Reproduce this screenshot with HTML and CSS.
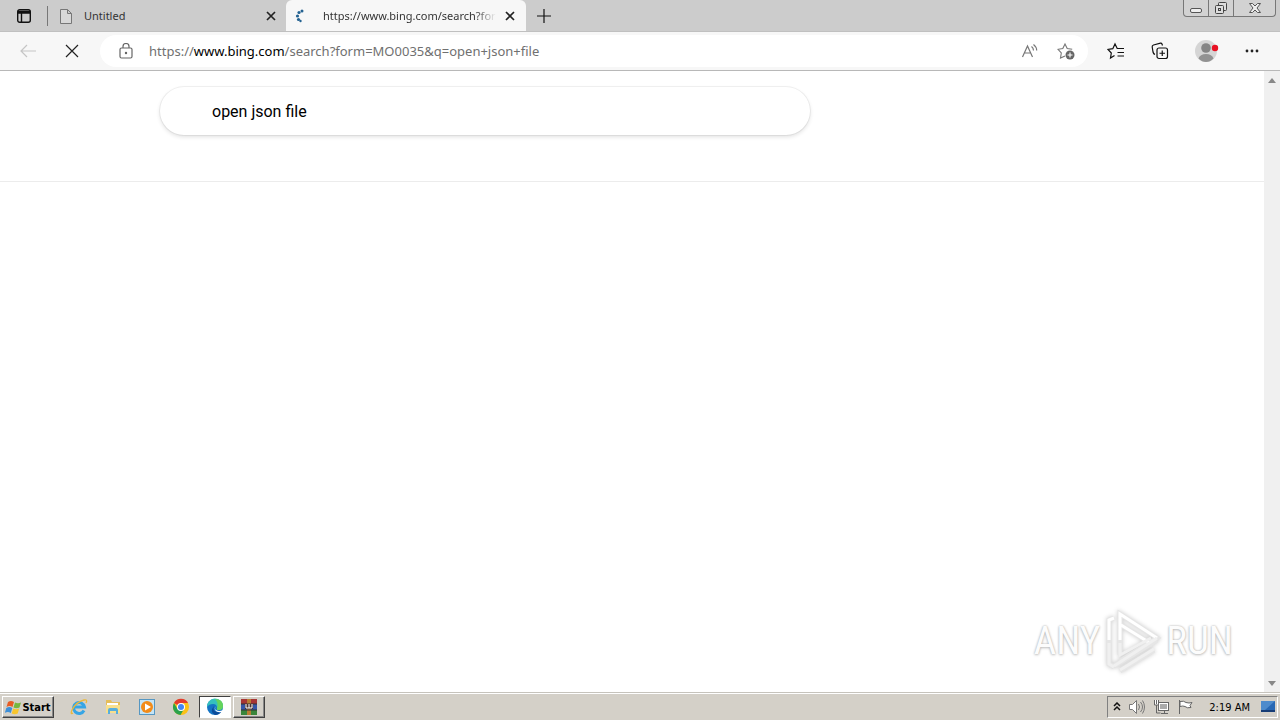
FILE: index.html
```html
<!DOCTYPE html>
<html lang="en">
<head>
<meta charset="utf-8">
<title>Bing search</title>
<link rel="stylesheet" href="styles.css">
</head>
<body>
<div class="screen">
  <header class="tabstrip">
    <button class="tab-actions" aria-label="Tab actions"><svg width="16" height="16" viewBox="0 0 16 16" fill="none" stroke="#111" stroke-width="1.4"><rect x="1.7" y="1.7" width="12.6" height="12.6" rx="2"/><path d="M2 3.5h12M2 5h12M5.5 5v9" /></svg></button>
    <div class="tab">
      <svg width="14" height="16" viewBox="0 0 14 16" fill="#d8d8d8" stroke="#777"><path d="M1.5 1.500h7l4 4v10h-11zM8.500 1.500v4h4"/></svg>
      <span class="tab-title">Untitled</span>
      <button class="close" aria-label="Close tab"><svg width="10" height="10" viewBox="0 0 10 10" stroke="#222" stroke-width="1.7"><path d="M1 1l8 8M9 1l-8 8"/></svg></button>
    </div>
    <div class="tab tab-active">
      <svg width="14" height="16" viewBox="0 0 14 16" fill="#246291"><circle cx="8" cy="3" r="1.500"/><circle cx="5" cy="4.500" r="1.600"/><circle cx="3.500" cy="8" r="1.600"/><circle cx="4.500" cy="11.500" r="1.600"/><circle cx="6.500" cy="13" r="1.200"/></svg>
      <span class="tab-title">https://www.bing.com/search?form</span>
      <button class="close" aria-label="Close tab"><svg width="10" height="10" viewBox="0 0 10 10" stroke="#222" stroke-width="1.7"><path d="M1 1l8 8M9 1l-8 8"/></svg></button>
    </div>
    <button class="new-tab" aria-label="New tab"><svg width="14" height="14" viewBox="0 0 14 14" stroke="#111" stroke-width="1.200"><path d="M7 0v14M0 7h14"/></svg></button>
    <div class="window-buttons">
      <button aria-label="Minimize"><svg width="14" height="14" viewBox="0 0 14 14" fill="#eee" stroke="#555"><rect x="1.500" y="7.500" width="11" height="4" rx="1.500"/></svg></button>
      <button aria-label="Restore"><svg width="14" height="14" viewBox="0 0 14 14" fill="#ddd" stroke="#444"><rect x="4.500" y="1.500" width="8" height="8" rx="1"/><rect x="1.500" y="4.500" width="8" height="8" rx="1"/><rect x="4.500" y="7.500" width="2" height="2"/></svg></button>
      <button class="wide" aria-label="Close"><svg width="14" height="14" viewBox="0 0 14 14" fill="#eee" stroke="#555"><path d="M1.500 2.500h3L7 5l2.500-2.500h3L9 7l3.500 4.500h-3L7 9l-2.500 2.500h-3L5 7z"/></svg></button>
    </div>
  </header>
  <div class="toolbar">
    <button class="nav back" aria-label="Back"><svg width="18" height="16" viewBox="0 0 18 16" fill="none" stroke="#c5c5c5" stroke-width="1.200"><path d="M17 8H2M8 2L2 8l6 6"/></svg></button>
    <button class="nav" aria-label="Stop"><svg width="14" height="14" viewBox="0 0 14 14" stroke="#222" stroke-width="1.200"><path d="M1 1l12 12M13 1L1 13"/></svg></button>
    <div class="address">
      <svg width="14" height="16" viewBox="0 0 14 16" fill="none" stroke="#666" stroke-width="1.200"><rect x="1" y="5" width="12" height="10" rx="1.500"/><path d="M4 5V3.500a3 3 0 0 1 6 0V5"/><circle cx="7" cy="10" r=".600" fill="#666"/></svg>
      <span class="url">https://<b>www.bing.com</b>/search?form=MO0035&amp;q=open+json+file</span>
      <button class="read" aria-label="Read aloud"><svg width="18" height="16" viewBox="0 0 18 16" fill="none" stroke="#777" stroke-width="1.200"><path d="M1.500 14L6.500 3l5 11M3.200 10h6.600M10.500 3.500q2 1.500 2 4M12.500 1.500q3.200 2.500 3.200 6"/></svg></button>
      <button aria-label="Add to favorites"><svg width="18" height="18" viewBox="0 0 18 18" fill="none" stroke="#777" stroke-width="1.100"><path d="M8 14l-4.500 2 .8-5L1 7.300l4.800-.7L8 2l2.200 4.600 5 .7"/><circle cx="13" cy="13" r="4.500" fill="#666" stroke="none"/><path d="M13 10.500v5M10.500 13h5" stroke="#fff"/></svg></button>
    </div>
    <div class="tools">
      <button aria-label="Favorites"><svg width="18" height="18" viewBox="0 0 18 18" fill="none" stroke="#111" stroke-width="1.200"><path d="M7.500 13.500L3.500 16l.8-5L1 7.500l4.800-.8L8 2l2.200 4.500H17M10.500 10.500H17M10.500 14H17"/></svg></button>
      <button aria-label="Collections"><svg width="18" height="18" viewBox="0 0 18 18" fill="none" stroke="#111" stroke-width="1.200"><path d="M4 12.500Q2.500 12 2 10L1.200 5Q1 3.500 2.500 3L9.500 1.200q1-.2 1.500.8l.5 1.500"/><rect x="6" y="6" width="10.500" height="10.500" rx="2"/><path d="M11.250 8.500v5.500M8.500 11.250H14"/></svg></button>
      <button aria-label="Profile"><svg width="24" height="24" viewBox="0 0 24 24"><circle cx="11" cy="12" r="11" fill="#d5d5d5"/><circle cx="11" cy="9" r="4.800" fill="#858585"/><path d="M3.500 19.500Q5 15 11 15t7.500 4.500Q15 23 11 23t-7.500-3.500z" fill="#929292"/><circle cx="20" cy="9" r="3.200" fill="#e81123"/></svg></button>
      <button aria-label="Settings and more"><svg width="14" height="4" viewBox="0 0 14 4" fill="#222"><circle cx="2" cy="2" r="1.400"/><circle cx="7" cy="2" r="1.400"/><circle cx="12" cy="2" r="1.400"/></svg></button>
    </div>
  </div>
  <div class="viewport">
    <main class="page">
      <form class="search-header">
        <input class="search" type="text" aria-label="Search" value="open json file">
      </form>
      <div class="watermark">
        <span>ANY</span>
        <svg width="58" height="64" viewBox="0 0 58 64" fill="none"><g stroke="#e6e6e6" stroke-width="5"><path d="M10 9l-5 2v44l5 3"/><path d="M16 46V5l37 24-37 23"/><path d="M17 16l32 20M10 57l43-26M16 62l34-21"/></g><g stroke="#fff" stroke-width="3"><path d="M10 9l-5 2v20M16 31V5l37 24M17 16l29 18"/></g><path d="M5 34v21l5 3M16 34v12l31-17M10 57l43-28M16 61l34-21" stroke="#f0f0f0" stroke-width="3"/></svg>
        <span>RUN</span>
      </div>
    </main>
    <div class="scrollbar">
      <svg width="8" height="5" viewBox="0 0 8 5" fill="#888"><path d="M0 5l4-5 4 5z"/></svg>
      <svg width="8" height="5" viewBox="0 0 8 5" fill="#888"><path d="M0 0l4 5 4-5z"/></svg>
    </div>
  </div>
  <footer class="taskbar">
    <button class="start"><svg width="17" height="16" viewBox="0 0 17 16"><path d="M3 3q3-2 6 0L7.500 8q-3-2-6 0z" fill="#e85c24"/><path d="M10 3.500q3 1.500 6 0L14.500 8.500q-3 1.500-6 0z" fill="#76b83f"/><path d="M1.300 9q3-2 6 0L5.800 14q-3-2-6 0z" fill="#3d8fd8"/><path d="M8.200 9.500q3 1.500 6 0L12.700 14.500q-3 1.500-6 0z" fill="#f8c62e"/></svg>Start</button>
    <div class="apps">
      <button aria-label="Internet Explorer"><svg width="18" height="18" viewBox="0 0 18 18" fill="none"><path d="M14 12.500A5.500 5.500 0 1 1 14.500 9H5" stroke="#35a5e5" stroke-width="3"/><path d="M3 15Q0 17 2 12 6 4 14 2q4-1 2 3" stroke="#eab83b" stroke-width="1.300"/></svg></button>
      <button aria-label="Explorer"><svg width="18" height="18" viewBox="0 0 18 18"><path d="M2 2h5l1 2h8v10H2z" fill="#e5bd5a"/><path d="M3 5h11v2H3z" fill="#fff"/><path d="M2 7h14v8H2z" fill="#f8df8c"/><path d="M4 16v-4q0-2 2-2h6q2 0 2 2v4h-2v-3H6v3z" fill="#58aedc"/></svg></button>
      <button aria-label="Media Player"><svg width="18" height="18" viewBox="0 0 18 18"><rect x="1.500" y="1.500" width="15" height="15" fill="#c4e4f6" stroke="#5697c2"/><circle cx="9" cy="9" r="6" fill="#f28b19"/><path d="M7 5.500l6 3.500-6 3.500z" fill="#fff"/></svg></button>
      <button aria-label="Chrome"><svg width="18" height="18" viewBox="0 0 18 18"><circle cx="9" cy="9" r="8" fill="#fbc116"/><path d="M9 9L2 5a8 8 0 0 1 14 0H9z" fill="#e33b2e"/><path d="M2 5a8 8 0 0 0 6.500 12L12 11 9 9 5.500 11z" fill="#2ba24c"/><circle cx="9" cy="9" r="4" fill="#fff"/><circle cx="9" cy="9" r="3" fill="#4285f4"/></svg></button>
      <button class="pressed" aria-label="Edge"><svg width="18" height="18" viewBox="0 0 18 18"><circle cx="9" cy="9" r="8" fill="#1474c4"/><path d="M1 9a8 8 0 0 1 16-1q0 4-4 4-3 0-2-2 0-4-4-4-4 0-6 3z" fill="#35c0bd"/><path d="M9 1q8 0 8 7 0 4-4 4-3 0-2-2 2-5-2-9z" fill="#65d45c"/><path d="M8 8q-2 5 3 6 3 1 5-1-3 4-7 4-6-3-1-9z" fill="#0c4b99"/><path d="M10 8q-2 3 0 4 3 2 7 0l-1 2q-5 1-7-2-1-2 1-4z" fill="#fff"/></svg></button>
      <button class="raised" aria-label="WinRAR"><svg width="18" height="18" viewBox="0 0 18 18"><path d="M1 1h16v5H1z" fill="#a73535"/><path d="M1 6h16v6H1z" fill="#3656a8"/><path d="M1 12h16v5H1z" fill="#39853a"/><path d="M7 1h4v16H7z" fill="#ba7d32"/><path d="M1 6h16M1 12h16" stroke="#333"/><path d="M5 6h8v5H5z" fill="#4d3431"/><path d="M6 6v4h6V6M9 6v4" fill="none" stroke="#fff"/></svg></button>
    </div>
    <div class="tray">
      <button aria-label="Show hidden icons"><svg width="8" height="10" viewBox="0 0 8 10" fill="none" stroke="#111" stroke-width="1.500"><path d="M1 4l3-3 3 3M1 8l3-3 3 3"/></svg></button>
      <svg width="18" height="16" viewBox="0 0 18 16" fill="#fff" stroke="#777"><path d="M1.500 5.500h3l4-4v13l-4-4h-3z"/><path d="M10.500 5q2 3 0 6M12.500 3q4 5 0 10M14.500 1.500q4 6.500 0 13" fill="none"/></svg>
      <svg width="17" height="16" viewBox="0 0 17 16" fill="#fff" stroke="#666"><rect x="5.500" y="3.500" width="10" height="8"/><path d="M7 5h7v5H7z" fill="#aaa" stroke="none"/><path d="M8 14.500h7M11.500 12v2M3.500 6v8h4" fill="none"/><path d="M1.500 1v5h4V1M3.500 1v4"/></svg>
      <svg width="17" height="16" viewBox="0 0 17 16" fill="#fff" stroke="#666"><path d="M2.500 1v14M3 2.500q4-1 6 1 3 1 6 0l-2 3 1 2q-4 1-6-1-2-1-5 0z"/></svg>
      <time>2:19 AM</time>
      <button class="desktop" aria-label="Show desktop"><svg width="16" height="14" viewBox="0 0 16 14"><path d="M1 1h14v9H1z" fill="#2868b4"/><path d="M1 1h14L5 10H1z" fill="#4d8bcc"/><path d="M1 10h14v2H1z" fill="#173d76"/></svg></button>
    </div>
  </footer>
</div>
</body>
</html>
```

FILE: styles.css
```css
* { box-sizing: border-box; }
body { margin: 0; background: #fff; font-family: "Noto Sans", sans-serif; }
button { display: flex; align-items: center; justify-content: center; padding: 0; border: 0; background: none; flex: none; }
svg { display: block; flex: none; }
.screen { display: flex; flex-direction: column; height: 100vh; overflow: hidden; }
.tabstrip { display: flex; flex: none; height: 32px; background: #ccc; border-bottom: 1px solid #c0c0c0; }
.tab-actions { width: 48px; height: 20px; margin-top: 6px; border-right: 1px solid #777; }
.tab { display: flex; align-items: center; gap: 11px; width: 238px; padding: 0 10px 0 11px; font-size: 11px; color: #333; }
.tab-active { width: 240px; background: #f7f7f7; border-radius: 6px 6px 0 0; padding: 0 11px 0 8px; gap: 15px; }
.tab-title { flex: 1; overflow: hidden; white-space: nowrap; }
.tab-active .tab-title { mask-image: linear-gradient(90deg, #000 88%, transparent); margin-right: -6px; }
.new-tab { width: 35px; }
.window-buttons { display: flex; height: 17px; margin-left: auto; margin-right: 4px; border: 1px solid #777; border-top: 0; border-radius: 0 0 4px 4px; background: #d2d2d2; }
.window-buttons button { width: 25px; border-right: 1px solid #777; }
.window-buttons .wide { width: 41px; border-right: 0; }
.toolbar { display: flex; align-items: center; flex: none; height: 39px; background: #f7f7f7; border-bottom: 1px solid #b8b8b8; padding-left: 6px; }
.nav { width: 44px; height: 30px; }
.address { display: flex; flex: 1; align-items: center; height: 32px; min-width: 0; margin-left: 6px; padding: 0 13px 0 19px; border-radius: 16px; background: #fff; }
.url { flex: 1; margin-left: 16px; overflow: hidden; font-size: 13px; white-space: nowrap; color: #707070; }
.url b { font-weight: 400; color: #000; }
.read { margin-right: 18px; }
.tools { display: flex; align-items: center; justify-content: space-between; width: 152px; margin: 0 21px 0 19px; }
.viewport { display: flex; flex: 1; min-height: 0; }
.page { position: relative; flex: 1; }
.search-header { height: 111px; padding: 16px 0 0 160px; border-bottom: 1px solid #ececec; }
.search { display: block; width: 650px; max-width: 90%; height: 48px; padding: 0 52px; border: 0; border-radius: 24px; outline: 0; background: #fff; box-shadow: 0 0 0 1px rgba(0,0,0,.05), 0 2px 4px 0 rgba(0,0,0,.12); font: 16px Roboto, sans-serif; color: #000; }
.watermark { position: absolute; right: 31px; bottom: 19px; display: flex; align-items: center; gap: 4px; font: 400 39px "Roboto Condensed", "Liberation Sans Narrow", "Liberation Sans", sans-serif; color: #fcfcfc; text-shadow: 0 0 2px #aaa, 0 1px 3px #ccc; }
.watermark svg { filter: drop-shadow(0 0 2px #ccc); }
.scrollbar { display: flex; flex-direction: column; align-items: center; justify-content: space-between; width: 16px; padding: 7px 0 6px; background: #f0f0f0; }
.taskbar { display: flex; align-items: center; flex: none; height: 28px; padding: 1px 2px 0; background: #d4d0c8; border-top: 1px solid #c6c3bc; box-shadow: inset 0 1px #fff; font: 11px "DejaVu Sans Condensed", sans-serif; }
.start { width: 52px; height: 22px; border: 1px solid; border-color: #fff #404040 #404040 #fff; box-shadow: inset -1px -1px #888; font: bold 11px "DejaVu Sans Condensed", sans-serif; color: #000; }
.apps { display: flex; margin-left: 8px; }
.apps button { width: 34px; height: 22px; }
.apps .pressed { width: 32px; margin: 0 2px 0 1px; border: 1px solid; border-color: #404040 #fff #fff #404040; background: #fff; }
.apps .raised { width: 32px; border: 1px solid; border-color: #fff #404040 #404040 #fff; box-shadow: inset -1px -1px #888; }
.tray { display: flex; align-items: center; gap: 7px; height: 22px; margin-left: auto; padding: 0 1px 0 5px; border: 1px solid; border-color: #808080 #fff #fff #808080; }
.tray time { margin-left: 8px; white-space: nowrap; }
.desktop { margin-left: 3px; }
```
